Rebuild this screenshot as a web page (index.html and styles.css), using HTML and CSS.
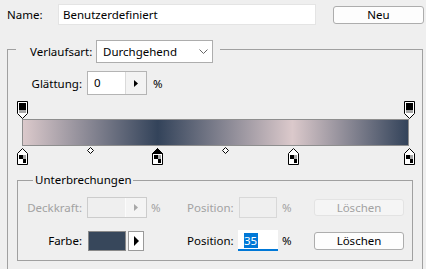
FILE: index.html
```html
<!DOCTYPE html>
<html lang="de">
<head>
    <meta charset="UTF-8">
    <title>Verläufe bearbeiten</title>
    <link rel="stylesheet" href="styles.css">
</head>
<body>
    <div class="name-row">
        <span class="name-label">Name:</span>
        <div class="name-field">Benutzerdefiniert</div>
        <button class="btn btn-new">Neu</button>
    </div>

    <div class="group gradient-group">
        <div class="group-head">
            <span class="head-label">Verlaufsart:</span>
            <div class="select">
                <span>Durchgehend</span>
                <svg width="9" height="5" viewBox="0 0 9 5"><polyline points="0.5,0.5 4.5,4.5 8.5,0.5" fill="none" stroke="#666"/></svg>
            </div>
        </div>

        <div class="smooth-row">
            <span class="row-label">Glättung:</span>
            <div class="spin">
                <span class="spin-value">0</span>
                <span class="spin-arrow"><svg width="4" height="7" viewBox="0 0 4 7"><path d="M0 0L4 3.5L0 7Z" fill="#000"/></svg></span>
            </div>
            <span class="unit">%</span>
        </div>

        <!-- gradient ramp with opacity stops above and color stops below -->
        <div class="ramp">
            <svg class="stop stop-top" style="left: calc(0% - 5px)" width="11" height="18" viewBox="0 0 11 18"><path d="M0.5 0.5H10.5V12.5L5.5 17.5L0.5 12.5Z" fill="#fff" stroke="#000"/><rect x="2" y="2" width="7" height="7" fill="#000"/><rect x="2" y="9" width="7" height="3" fill="#a8a8a8"/></svg>
            <svg class="stop stop-top" style="left: calc(100% - 5px)" width="11" height="18" viewBox="0 0 11 18"><path d="M0.5 0.5H10.5V12.5L5.5 17.5L0.5 12.5Z" fill="#fff" stroke="#000"/><rect x="2" y="2" width="7" height="7" fill="#000"/><rect x="2" y="9" width="7" height="3" fill="#a8a8a8"/></svg>

            <div class="bar"></div>

            <svg class="stop stop-bottom" style="left: calc(0% - 5px)" width="11" height="17" viewBox="0 0 11 17"><path d="M5.5 0.5L10.5 5.5V16.5H0.5V5.5Z" fill="#fff" stroke="#000"/><rect x="2" y="7" width="4" height="4" fill="#000"/><rect x="6" y="7" width="3" height="4" fill="#a8a8a8"/><rect x="2" y="11" width="4" height="4" fill="#fff"/><rect x="6" y="11" width="3" height="4" fill="#000"/></svg>
            <svg class="stop stop-bottom" style="left: calc(35% - 5px)" width="11" height="17" viewBox="0 0 11 17"><path d="M5.5 0.5L10.5 5.5V16.5H0.5V5.5Z" fill="#fff" stroke="#000"/><path d="M5.5 0.5L10.5 5.5H0.5Z" fill="#000" stroke="#000"/><rect x="2" y="7" width="4" height="4" fill="#000"/><rect x="6" y="7" width="3" height="4" fill="#a8a8a8"/><rect x="2" y="11" width="4" height="4" fill="#fff"/><rect x="6" y="11" width="3" height="4" fill="#000"/></svg>
            <svg class="stop stop-bottom" style="left: calc(70% - 5px)" width="11" height="17" viewBox="0 0 11 17"><path d="M5.5 0.5L10.5 5.5V16.5H0.5V5.5Z" fill="#fff" stroke="#000"/><rect x="2" y="7" width="4" height="4" fill="#000"/><rect x="6" y="7" width="3" height="4" fill="#a8a8a8"/><rect x="2" y="11" width="4" height="4" fill="#fff"/><rect x="6" y="11" width="3" height="4" fill="#000"/></svg>
            <svg class="stop stop-bottom" style="left: calc(100% - 5px)" width="11" height="17" viewBox="0 0 11 17"><path d="M5.5 0.5L10.5 5.5V16.5H0.5V5.5Z" fill="#fff" stroke="#000"/><rect x="2" y="7" width="4" height="4" fill="#000"/><rect x="6" y="7" width="3" height="4" fill="#a8a8a8"/><rect x="2" y="11" width="4" height="4" fill="#fff"/><rect x="6" y="11" width="3" height="4" fill="#000"/></svg>

            <svg class="midpoint" style="left: calc(17.5% - 3px)" width="7" height="7" viewBox="0 0 7 7"><path d="M3.5 0.5L6.5 3.5L3.5 6.5L0.5 3.5Z" fill="#fff" stroke="#000"/></svg>
            <svg class="midpoint" style="left: calc(52.5% - 3px)" width="7" height="7" viewBox="0 0 7 7"><path d="M3.5 0.5L6.5 3.5L3.5 6.5L0.5 3.5Z" fill="#fff" stroke="#000"/></svg>
        </div>

        <div class="group stops-group">
            <div class="legend">Unterbrechungen</div>
            <div class="stop-grid">
                <span class="row-label disabled">Deckkraft:</span>
                <div class="spin spin-small disabled">
                    <span class="spin-value"></span>
                    <span class="spin-arrow"><svg width="4" height="7" viewBox="0 0 4 7"><path d="M0 0L4 3.5L0 7Z" fill="#a8a8a8"/></svg></span>
                </div>
                <span class="unit disabled">%</span>
                <span class="pos-label disabled">Position:</span>
                <div class="pos-field disabled"></div>
                <span class="unit disabled">%</span>
                <button class="btn btn-delete disabled">Löschen</button>

                <span class="row-label">Farbe:</span>
                <div class="color-cell">
                    <span class="swatch"></span>
                    <span class="swatch-arrow"><svg width="5" height="10" viewBox="0 0 5 10"><path d="M0 0L5 5L0 10Z" fill="#000"/></svg></span>
                </div>
                <span class="unit"></span>
                <span class="pos-label">Position:</span>
                <div class="pos-field active"><span class="selected">35</span><span class="caret"></span></div>
                <span class="unit">%</span>
                <button class="btn btn-delete">Löschen</button>
            </div>
        </div>
    </div>
</body>
</html>
```

FILE: styles.css
```css
body {
    margin: 0;
    background-color: #efefef;
    font-family: "Noto Sans", "Open Sans", sans-serif;
    font-size: 11.5px;
    color: #000;
    overflow: hidden;
}
.name-row {
    display: flex;
    align-items: center;
    height: 21px;
    padding: 4px 0 0 7px;
}
.name-label {
    width: 51px;
}
.name-field {
    box-sizing: border-box;
    width: 258px;
    height: 21px;
    line-height: 19px;
    padding-left: 4px;
    background-color: #fff;
    border: 1px solid #e4e4e4;
}
.btn {
    box-sizing: border-box;
    border: 1px solid #adadad;
    border-radius: 3px;
    background-color: #fdfdfd;
    font: inherit;
    color: #000;
    padding: 0;
    text-align: center;
}
.btn-new {
    margin-left: 17px;
    width: 91px;
    height: 18px;
    line-height: 15px;
}
.group {
    box-sizing: border-box;
    border: 1px solid #a0a0a0;
}
.gradient-group {
    margin: 24px 0 0 7px;
    width: 416px;
    border-bottom: none;
    padding-bottom: 8px;
}
.group-head {
    display: flex;
    align-items: center;
    width: fit-content;
    height: 23px;
    margin: -10px 0 0 8px;
    padding: 0 7px 0 14px;
    background-color: #efefef;
}
.head-label {
    width: 66px;
}
.select {
    box-sizing: border-box;
    display: flex;
    align-items: center;
    justify-content: space-between;
    width: 117px;
    height: 23px;
    padding: 0 4px 0 6px;
    background-color: #fff;
    border: 1px solid #adadad;
}
.smooth-row {
    display: flex;
    align-items: center;
    margin-top: 8px;
}
.row-label {
    box-sizing: border-box;
    width: 79px;
    padding-right: 5px;
    text-align: right;
}
.spin {
    box-sizing: border-box;
    display: flex;
    width: 60px;
    height: 24px;
    border: 1px solid #b4b4b4;
}
.spin-value {
    flex: 1;
    padding-left: 6px;
    line-height: 22px;
    background-color: #fff;
}
.spin-arrow {
    display: flex;
    align-items: center;
    justify-content: center;
    width: 20px;
    border-left: 1px solid #dadada;
    background-color: #f3f3f3;
}
.unit {
    margin-left: 6px;
}
.ramp {
    position: relative;
    width: 387px;
    margin: 5px 0 0 14px;
    padding: 19px 0 20px;
}
.bar {
    box-sizing: border-box;
    height: 27px;
    border: 1px solid #8e8e8e;
    background: linear-gradient(to right, #dbc9cb 0%, #33435a 35%, #dbc9cb 70%, #33435a 100%);
}
.stop {
    position: absolute;
    display: block;
}
.stop-top {
    top: 1px;
}
.stop-bottom {
    top: 48px;
}
.midpoint {
    position: absolute;
    display: block;
    top: 47px;
}
.stops-group {
    margin: 14px 9px 0 9px;
    padding-bottom: 9px;
}
.legend {
    width: fit-content;
    margin: -9px 0 0 15px;
    padding: 0 2px;
    line-height: 16px;
    background-color: #efefef;
}
.stop-grid {
    display: grid;
    grid-template-columns: 69px 60px 40px 51px 40px 36px 90px;
    grid-auto-rows: 21px;
    row-gap: 12px;
    align-items: center;
    margin-top: 9px;
}
.stop-grid .row-label {
    width: auto;
}
.stop-grid .unit {
    margin-left: 4px;
}
.disabled {
    color: #a2a2a2;
}
.spin-small {
    height: 21px;
}
.spin.disabled {
    border-color: #cccccc;
}
.spin.disabled .spin-value {
    background-color: #efefef;
}
.spin.disabled .spin-arrow {
    border-left-color: #fbfbfb;
    background-color: #f4f4f4;
}
.pos-field {
    box-sizing: border-box;
    height: 21px;
    line-height: 19px;
}
.pos-field.disabled {
    width: 38px;
    margin-left: 1px;
    border: 1px solid #d8d8d8;
}
.pos-field.active {
    display: flex;
    align-items: center;
    width: 40px;
    padding: 1px 0 0 6px;
    background-color: #fff;
    border-bottom: 2px solid #0078d7;
}
.selected {
    line-height: 15px;
    background-color: #0078d7;
    color: #fff;
}
.caret {
    width: 1px;
    height: 15px;
    background-color: #0078d7;
}
.btn-delete {
    width: 90px;
    height: 18px;
    line-height: 15px;
}
.btn-delete.disabled {
    height: 17px;
    background-color: #f5f5f5;
    border-color: #e3e3e3;
    color: #a2a2a2;
}
.color-cell {
    display: flex;
    align-items: center;
    margin-left: 1px;
}
.swatch {
    box-sizing: border-box;
    width: 38px;
    height: 20px;
    background-color: #37475b;
    border: 1px solid #8a8a8a;
}
.swatch-arrow {
    box-sizing: border-box;
    display: flex;
    align-items: center;
    justify-content: center;
    width: 16px;
    height: 20px;
    margin-left: 2px;
    background-color: #fff;
    border: 1px solid #9a9a9a;
}
```
